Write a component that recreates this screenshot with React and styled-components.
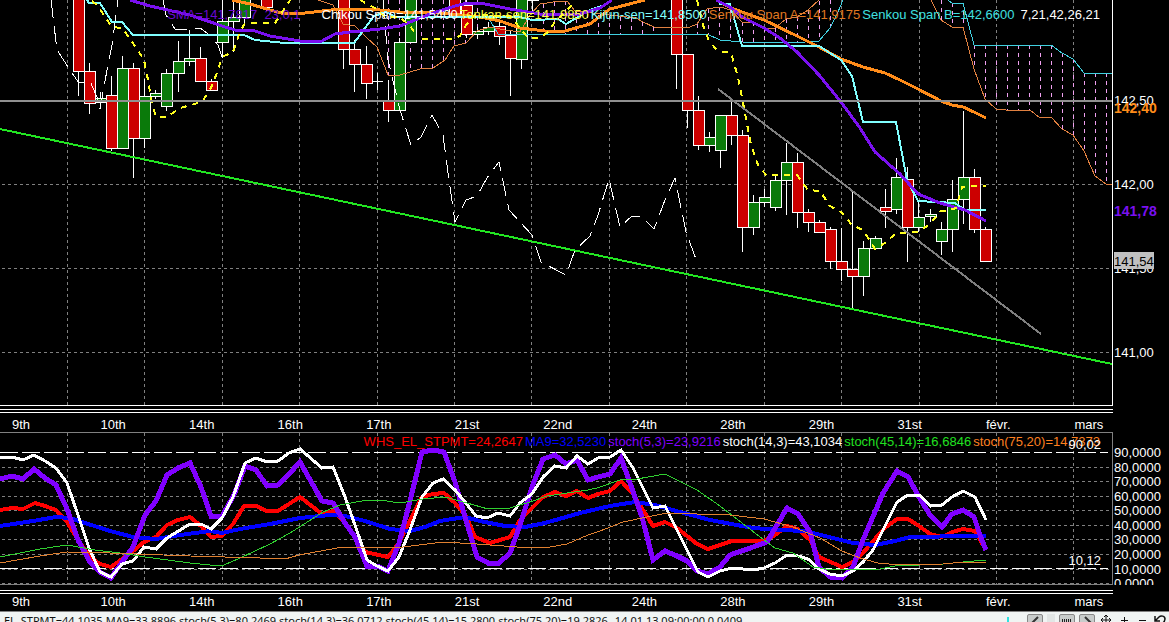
import styled, { createGlobalStyle } from "styled-components";

const GRID_X = [67, 144, 222, 299, 377, 454, 531, 609, 686, 764, 841, 919, 996, 1073];

const DATES = [
  "9th", "10th", "14th", "16th", "17th", "21st", "22nd",
  "24th", "28th", "29th", "31st", "févr.", "mars",
];

/* x center, body top, body bottom, wick top, wick bottom, rising */
const CANDLES = [
  [78, -5, 71, -5, 96, 0],
  [89, 71, 103, 63, 114, 0],
  [100, 98, 102, 92, 109, 1],
  [111, 95, 148, 76, 151, 0],
  [122, 68, 148, 56, 148, 1],
  [133, 68, 138, 63, 178, 0],
  [144, 96, 138, 79, 148, 1],
  [155, 93, 96, 90, 99, 1],
  [166, 73, 106, 69, 111, 1],
  [178, 61, 73, 41, 92, 1],
  [189, 58, 61, 30, 66, 1],
  [200, 58, 81, 47, 81, 0],
  [211, 81, 90, 79, 90, 0],
  [222, 21, 42, -5, 58, 1],
  [233, 17, 21, -5, 52, 1],
  [244, -5, 17, -5, 26, 1],
  [266, -5, 7, -5, 7, 0],
  [343, -5, 49, -5, 69, 0],
  [354, 49, 64, 40, 92, 0],
  [366, 64, 83, 46, 99, 0],
  [377, 81, 81, 73, 90, 1],
  [388, 101, 110, 80, 122, 0],
  [399, 42, 110, 38, 110, 1],
  [410, -5, 42, -5, 42, 1],
  [454, -5, 16, -5, 16, 0],
  [466, 5, 34, 0, 38, 0],
  [477, 31, 34, 27, 39, 1],
  [488, 27, 31, 22, 35, 1],
  [499, 26, 36, 20, 45, 0],
  [510, 35, 58, 30, 96, 0],
  [521, -5, 59, -5, 69, 1],
  [532, -5, 0, -5, 12, 1],
  [676, -5, 54, -5, 89, 0],
  [687, 54, 110, 54, 128, 0],
  [698, 110, 145, 96, 150, 0],
  [709, 137, 145, 132, 152, 1],
  [720, 115, 150, 115, 168, 1],
  [731, 115, 135, 98, 145, 0],
  [742, 135, 227, 130, 252, 0],
  [753, 202, 227, 195, 235, 1],
  [764, 197, 202, 189, 207, 1],
  [775, 180, 207, 176, 211, 1],
  [786, 162, 180, 143, 215, 1],
  [797, 162, 212, 153, 228, 0],
  [808, 212, 222, 209, 232, 0],
  [819, 222, 232, 220, 232, 0],
  [830, 229, 261, 227, 269, 0],
  [841, 261, 269, 228, 281, 0],
  [852, 269, 276, 192, 308, 0],
  [863, 248, 276, 241, 296, 1],
  [875, 238, 248, 236, 250, 1],
  [885, 207, 211, 189, 228, 0],
  [896, 177, 209, 158, 214, 1],
  [907, 179, 227, 167, 262, 0],
  [918, 217, 227, 202, 232, 1],
  [930, 214, 216, 209, 222, 1],
  [941, 229, 241, 222, 255, 1],
  [952, 199, 229, 180, 252, 1],
  [963, 177, 199, 111, 224, 1],
  [974, 177, 229, 169, 233, 0],
  [985, 229, 261, 227, 261, 0],
];

/* x, top, bottom of each cloud bar */
const CLOUD = [
  [388, 0, 75], [399, 0, 75], [410, 0, 71], [421, 0, 69], [432, 0, 68], [443, 0, 60],
  [454, 0, 46], [465, 0, 43], [477, 0, 31], [543, 4, 34], [554, 2, 34], [565, 1, 34],
  [576, 11, 34], [587, 14, 34], [598, 15, 34], [609, 15, 34], [620, 17, 34], [631, 18, 34],
  [642, 22, 34], [653, 27, 34], [697, 24, 34], [708, 9, 34], [719, 7, 40], [730, 10, 41],
  [742, 22, 42], [753, 22, 42], [764, 28, 43], [775, 28, 43], [786, 19, 43], [797, 17, 43],
  [808, 10, 42], [819, 1, 41], [830, 0, 28], [941, 0, 20], [952, 3, 27], [963, 3, 27],
  [974, 45, 69], [985, 45, 99], [996, 45, 109], [1007, 45, 110], [1018, 45, 110],
  [1029, 45, 110], [1040, 45, 118], [1051, 45, 117], [1062, 53, 129], [1073, 59, 135],
  [1084, 73, 151], [1095, 73, 176], [1106, 73, 184],
];

const SPAN_A = [
  "318,0 333,5 343,24 355,26 366,37 377,47 388,75 400,75 420,69 433,68 445,60 454,46 466,43 477,31 490,27 505,30 520,32 530,15 540,4 560,1 567,1 575,11 600,14 636,18 643,22 654,27 690,27 697,24 707,9 720,7 731,10 742,22 753,22 764,28 775,28 786,19 797,17 808,10 819,0",
  "931,0 941,20 952,27 963,27 974,69 985,99 996,109 1006,110 1030,110 1040,118 1051,117 1062,129 1073,135 1084,151 1095,176 1106,184 1112,185",
];

const SPAN_B = [
  "488,17 498,34 707,34 720,40 742,42 780,43 805,42 819,41 830,28 838,12 843,0",
  "948,0 952,3 963,3 974,45 1051,45 1062,53 1073,59 1084,73 1112,73",
];

const KIJUN = [
  "87,0 89,3 100,3 112,22 122,22 133,35 244,35 255,40 285,43 354,43 374,16 386,12 396,17 520,17 532,20 558,19 566,24 590,10 605,5 612,0",
  "718,0 720,4 730,4 742,46 819,46 841,60 852,76 863,122 896,122 907,180 918,201 955,203 965,210 986,210",
];

const SMA = [
  "130,0 150,6 190,15 222,26 235,30 255,31 270,36 300,41 322,41 335,34 350,32 380,29 400,26 430,14 455,6 468,3 485,4 510,9 540,14 580,14 600,8 612,0",
  "716,0 730,7 742,17 764,28 780,38 797,52 819,75 841,102 860,128 875,152 900,174 918,194 940,203 965,210 986,221",
];

const LONG_MA = [
  "232,0 250,4 270,10 285,14 305,13 340,9 370,9 400,12 440,13 480,17 500,21 520,28 545,31 565,31 590,24 610,9 645,0",
  "716,0 731,8 742,12 764,20 797,36 819,47 841,59 863,67 885,73 900,80 918,89 941,101 952,105 963,107 974,112 986,118",
];

const TENKAN = [
  "92,1 98,6 107,20 112,27 122,28 131,40 144,60 148,80 152,103 156,117 167,117 180,108 195,104 204,99 211,88 218,70 222,57 233,52 240,32 245,23 275,23 285,8 290,0",
  "360,0 375,8 385,17 400,17 410,26 415,33",
  "422,39 452,39 460,36 466,25 475,15 510,16 520,28 528,38 540,38 548,32 555,22 565,12 575,2",
  "697,0 703,25 709,41 718,51 731,53 738,77 744,108 751,145 758,165 766,175 797,175 808,190 820,191 830,206 841,212 852,225 863,230 875,249 885,243 896,233 918,232 930,224 941,211 950,210 956,208 962,187 970,186 986,186",
];

const CHIKOU = [
  "51,0 57,50 72,73 79,83 90,81 97,97 100,109 107,70 112,45 118,0",
  "163,0 166,15 175,29 189,30 200,28 211,36 218,45 222,57",
  "383,0 388,60 400,110 411,145 421,137 432,115 443,135 449,180 455,222 466,200 477,196 487,178 499,162 509,210 520,222 532,235 541,262 566,275 575,250 590,236 598,215 609,179 620,227 632,216 642,217 654,229 665,200 675,178 686,232 697,262",
];

const LEVELS = [467, 481, 496, 510, 525, 539, 554, 569, 583];

const OSCILLATORS = [
  {
    color: "#ff0000",
    width: 4,
    points:
      "0,510 12,508 23,509 35,503 45,506 56,510 67,522 78,540 90,557 100,564 111,567 122,559 133,551 144,542 156,537 167,525 178,520 190,517 201,526 211,537 222,536 233,524 244,506 256,506 267,511 278,511 289,504 300,497 322,514 333,511 345,523 355,537 365,552 388,557 399,543 410,520 422,497 433,494 444,493 455,503 466,516 475,537 490,543 510,537 520,520 532,508 543,497 555,492 566,496 577,491 588,498 598,494 610,491 621,481 633,494 653,526 665,522 677,528 697,544 708,549 720,545 732,541 764,541 775,535 787,526 798,529 810,540 819,557 842,567 853,562 863,553 880,533 886,527 897,519 908,519 919,526 930,534 942,537 952,532 963,529 975,531 986,550",
  },
  {
    color: "#0000ff",
    width: 4,
    points:
      "0,526 33,521 56,517 70,518 85,523 110,531 133,537 156,539 180,535 210,531 222,533 240,529 270,524 300,518 330,515 345,516 365,521 390,529 410,531 425,527 440,521 465,517 480,521 505,526 525,527 545,523 580,513 610,506 635,502 655,505 680,512 710,520 753,528 780,530 805,531 825,536 853,543 875,545 895,541 910,537 970,536 986,536",
  },
  {
    color: "#8000ff",
    width: 5,
    points:
      "0,479 12,476 23,479 34,469 45,478 56,485 67,509 78,540 90,562 100,572 111,578 122,562 133,547 145,515 156,501 167,475 178,468 190,463 201,487 211,516 222,516 234,495 245,466 256,470 267,486 278,485 289,474 300,462 322,501 333,503 345,523 355,537 367,566 377,566 388,571 399,543 410,501 422,452 433,450 444,452 455,482 465,517 477,557 488,563 499,563 510,553 520,525 532,487 543,459 555,455 566,464 577,460 588,480 598,477 610,474 621,458 630,483 642,517 653,560 665,551 677,556 687,561 697,571 708,574 720,567 730,555 753,547 767,542 777,525 787,508 798,514 810,532 819,567 830,577 842,578 853,567 863,540 883,493 897,471 908,477 919,497 930,515 942,527 952,514 963,510 974,517 980,535 986,550",
  },
  {
    color: "#ffffff",
    width: 3,
    points:
      "0,458 12,457 23,460 34,455 45,461 56,468 67,483 78,515 89,548 100,572 111,577 122,564 133,561 144,547 156,549 167,538 190,524 201,524 211,529 222,518 233,497 245,463 256,458 267,462 278,461 289,453 300,449 322,468 333,467 345,497 355,525 367,560 377,566 388,571 399,557 410,530 422,497 433,483 443,479 455,490 465,502 476,516 487,518 498,513 510,516 520,503 532,494 543,477 555,466 566,468 577,456 588,464 598,458 610,457 621,450 633,468 653,508 665,506 677,530 698,572 708,577 720,571 732,568 743,569 753,570 764,568 775,563 787,555 798,556 808,559 819,569 830,574 842,576 853,571 863,562 873,550 883,530 897,502 908,495 919,495 931,506 942,505 952,497 963,491 975,497 986,520",
  },
  {
    color: "#30d030",
    width: 1,
    points:
      "0,557 40,549 67,545 95,550 120,553 145,557 190,563 210,565 224,565 240,558 270,544 290,533 323,512 340,505 367,500 380,500 400,503 423,499 445,497 467,503 488,509 510,508 530,502 547,496 588,490 597,488 623,479 637,479 665,474 697,490 720,506 764,540 775,548 793,553 813,567 833,570 880,569 895,566 943,564 963,562 986,560",
  },
  {
    color: "#e08030",
    width: 1,
    points:
      "0,563 40,556 67,552 110,553 190,556 260,558 285,559 299,555 337,548 360,547 403,547 443,542 477,544 517,547 550,547 567,544 588,535 600,531 623,522 647,517 667,513 697,514 730,515 764,519 793,527 820,538 842,551 860,558 878,563 900,565 943,564 963,562 986,562",
  },
];

const PRICE_LEGEND = [
  ["Chikou Span=141,5400", "#ffffff"],
  ["Tenkan-sen=141,9850", "#ffff40"],
  ["Kijun-sen=141,8500", "#80ffff"],
  ["Senkou Span A=141,9175", "#e07820"],
  ["Senkou Span B=142,6600", "#40e0e0"],
];

const STOCH_LEGEND = [
  ["WHS_EL_STPMT=24,2647", "#ff0000"],
  ["MA9=32,5230", "#0000ff"],
  ["stoch(5,3)=23,9216", "#8000ff"],
  ["stoch(14,3)=43,1034", "#ffffff"],
  ["stoch(45,14)=16,6846", "#20e020"],
  ["stoch(75,20)=14,7373", "#ff8020"],
];

const Candle = ({ data: [x, top, bottom, high, low, up] }) => (
  <g stroke="#ffffff">
    <line x1={x + 0.5} y1={high} x2={x + 0.5} y2={low} />
    {top === bottom ? (
      <line x1={x - 5} y1={top + 0.5} x2={x + 6} y2={top + 0.5} />
    ) : (
      <rect
        x={x - 4.5}
        y={top + 0.5}
        width="11"
        height={bottom - top}
        fill={up ? "#0a7a0a" : "#cc0000"}
      />
    )}
  </g>
);

const Curve = ({ parts, ...rest }) =>
  parts.map((points) => <polyline key={points} points={points} fill="none" {...rest} />);

const PriceChart = () => (
  <ChartSvg viewBox="0 0 1112 405" preserveAspectRatio="none" height="405">
    <g stroke="#808080" strokeDasharray="3 3">
      {GRID_X.map((x) => (
        <line key={x} x1={x + 0.5} y1="0" x2={x + 0.5} y2="405" />
      ))}
      {[184, 268, 352].map((y) => (
        <line key={y} x1="2" y1={y + 0.5} x2="1112" y2={y + 0.5} />
      ))}
    </g>
    <g stroke="#f0a0f0" strokeDasharray="4 4">
      {CLOUD.map(([x, top, bottom]) => (
        <line key={x} x1={x + 0.5} y1={top} x2={x + 0.5} y2={bottom} />
      ))}
    </g>
    {CANDLES.map((c) => (
      <Candle key={c[0]} data={c} />
    ))}
    <Curve parts={SPAN_A} stroke="#e08040" />
    <Curve parts={SPAN_B} stroke="#40d0e0" />
    <Curve parts={CHIKOU} stroke="#ffffff" strokeDasharray="18 8" />
    <Curve parts={LONG_MA} stroke="#ff8c1a" strokeWidth="3" />
    <Curve parts={KIJUN} stroke="#80ffff" strokeWidth="2" />
    <Curve parts={SMA} stroke="#7a10f0" strokeWidth="3" />
    <Curve parts={TENKAN} stroke="#ffff20" strokeWidth="2" strokeDasharray="6 6" />
    <line x1="0" y1="101" x2="1112" y2="101" stroke="#909090" strokeWidth="2" />
    <line x1="718" y1="89" x2="1041" y2="334" stroke="#808080" strokeWidth="2" />
    <line x1="0" y1="129" x2="1112" y2="364" stroke="#22e622" strokeWidth="2" />
  </ChartSvg>
);

const StochChart = () => (
  <ChartSvg viewBox="0 433 1112 151" preserveAspectRatio="none" height="151">
    <g stroke="#808080" strokeDasharray="3 3">
      {GRID_X.map((x) => (
        <line key={x} x1={x + 0.5} y1="433" x2={x + 0.5} y2="584" />
      ))}
      {LEVELS.map((y) => (
        <line key={y} x1="2" y1={y + 0.5} x2="1112" y2={y + 0.5} />
      ))}
    </g>
    <g stroke="#ffffff" strokeDasharray="18 4">
      <line x1="0" y1="452.5" x2="1108" y2="452.5" />
      <line x1="0" y1="568.5" x2="1108" y2="568.5" />
    </g>
    {OSCILLATORS.map((o) => (
      <polyline key={o.color} points={o.points} fill="none" stroke={o.color} strokeWidth={o.width} />
    ))}
  </ChartSvg>
);

const DateScale = ({ pad, gap }) => (
  <DateAxis $pad={pad} $gap={gap}>
    <DateRow>
      {DATES.map((d) => (
        <span key={d}>{d}</span>
      ))}
    </DateRow>
  </DateAxis>
);

const App = () => {
  return (
    <>
      <GlobalStyle />
      <Page>
        <Board>
          <PricePlot>
            <PriceChart />
            <Legend $top={7}>
              <LegendItem $color="#6a08d0" $space={19}>SMA=141,7817&nbsp; 23,0,1</LegendItem>
              {PRICE_LEGEND.map(([text, color]) => (
                <LegendItem key={text} $color={color}>{text}</LegendItem>
              ))}
              <LegendItem $color="#ffffff" $before={4}>7,21,42,26,21</LegendItem>
            </Legend>
          </PricePlot>
          <AxisSvg height="406">
            <text x="1" y="105">142,50</text>
            <BoldTick x="1" y="113" fill="#ff8c1a">142,40</BoldTick>
            <text x="1" y="189">142,00</text>
            <BoldTick x="1" y="216" fill="#7a10f0">141,78</BoldTick>
            <text x="1" y="273">141,50</text>
            <rect x="1" y="252" width="40" height="17" fill="#c0c0c0" />
            <text x="1" y="266" fill="#000000">141,54</text>
            <text x="1" y="357">141,00</text>
          </AxisSvg>

          <DateScale pad="4px 0 0" gap={3} />
          <span />

          <StochPlot>
            <StochChart />
            <Legend $top={1}>
              {STOCH_LEGEND.map(([text, color]) => (
                <LegendItem key={text} $color={color}>{text}</LegendItem>
              ))}
            </Legend>
            <LevelTag $top={4}>90,02</LevelTag>
            <LevelTag $top={120}>10,12</LevelTag>
          </StochPlot>
          <AxisSvg height="153">
            {[20, 35, 49, 64, 78, 93, 107, 122, 137, 151].map((y, i) => (
              <text key={y} x="1" y={y + 5}>{90 - i * 10 || "0"},0000</text>
            ))}
          </AxisSvg>

          <DateScale pad="0 0 2px" gap={5} />
          <span />
        </Board>

        <StatusBar>
          <StatusText>
            <span>EL_STPMT=44,1035</span>
            <span>MA9=33,8896</span>
            <span>stoch(5,3)=80,2469</span>
            <span>stoch(14,3)=36,0712</span>
            <span>stoch(45,14)=15,2800</span>
            <span>stoch(75,20)=19,2826</span>
            <StatusTime>14.01.13 09:00:00 0,0409</StatusTime>
          </StatusText>
          <Tools>
            <CursorMark />
            <Tool aria-label="Draw" $framed>
              <svg width="14" height="14">
                <path d="M10 2L5 7l4 4" fill="none" stroke="#333" strokeWidth="2" />
              </svg>
            </Tool>
            <Grip />
            <Tool aria-label="Ruler" $framed>
              <svg width="14" height="14" shapeRendering="crispEdges">
                <path d="M2.5 4v5M4.5 4v5M6.5 4v5M8.5 4v5M10.5 4v5" stroke="#222" />
              </svg>
            </Tool>
            <Tool aria-label="Line" $framed>
              <svg width="14" height="14">
                <path d="M5 2l5 5-4 4" fill="none" stroke="#333" strokeWidth="2" />
              </svg>
            </Tool>
            <Tool aria-label="Move">
              <svg width="12" height="12">
                <path d="M6 1v10M1 6h10M4 3l2-2 2 2M4 9l2 2 2-2M3 4L1 6l2 2M9 4l2 2-2 2" fill="none" stroke="#111" />
              </svg>
            </Tool>
            <Tool aria-label="Zoom in">
              <svg width="12" height="12" shapeRendering="crispEdges">
                <path d="M6.5 3v7M3 6.5h7" stroke="#111" />
              </svg>
            </Tool>
            <Tool aria-label="Zoom out">
              <svg width="12" height="12" shapeRendering="crispEdges">
                <path d="M3 6.5h7" stroke="#111" />
              </svg>
            </Tool>
            <Tool aria-label="Undo">
              <svg width="14" height="12">
                <path d="M2 2v5h5M2 7l4-4c2-2 6-1 6 2s-2 4-4 6" fill="none" stroke="#111" strokeWidth="1.5" />
              </svg>
            </Tool>
          </Tools>
        </StatusBar>
      </Page>
    </>
  );
};

export default App;

const GlobalStyle = createGlobalStyle`
  * {
    box-sizing: border-box;
  }

  body {
    margin: 0;
    background: #000;
    overflow: hidden;
  }
`;

const Page = styled.main`
  font-family: "Liberation Sans", Arial, sans-serif;
  font-size: 13px;
  line-height: 15px;
  color: #fff;
`;

const Board = styled.div`
  display: grid;
  grid-template-columns: minmax(0, 1fr) 56px;
`;

const PricePlot = styled.section`
  position: relative;
  border-right: 1px solid #fff;
  border-bottom: 1px solid #fff;
`;

const StochPlot = styled.section`
  position: relative;
  border: 1px solid #808080;
  border-left: none;
`;

const ChartSvg = styled.svg`
  display: block;
  width: 100%;
  shape-rendering: crispEdges;
`;

const AxisSvg = styled.svg`
  display: block;
  width: 100%;
  overflow: hidden;
  fill: #fff;
`;

const BoldTick = styled.text`
  font-size: 14px;
  font-weight: bold;
`;

/* The legend is drawn over the curves */
const Legend = styled.div`
  position: absolute;
  top: ${({ $top }) => $top}px;
  right: 12px;
  display: flex;
  gap: 2px;
  white-space: nowrap;
`;

const LegendItem = styled.span`
  color: ${({ $color }) => $color};
  margin-left: ${({ $before }) => $before || 0}px;
  margin-right: ${({ $space }) => $space || 0}px;
`;

const LevelTag = styled.span`
  position: absolute;
  top: ${({ $top }) => $top}px;
  right: 11px;
`;

const DateAxis = styled.div`
  margin-top: ${({ $gap }) => $gap}px;
  padding: ${({ $pad }) => $pad};
  border-top: 4px double #fff;
  overflow: hidden;
`;

/* Runs past the right edge, the last day is not complete */
const DateRow = styled.div`
  display: grid;
  grid-template-columns: repeat(13, 1fr);
  margin: 0 -50px 0 12px;
  white-space: nowrap;
`;

const StatusBar = styled.footer`
  display: flex;
  justify-content: space-between;
  height: 24px;
  border-top: 1px solid #808080;
  background: #f0f4f3;
  color: #111;
`;

const StatusText = styled.div`
  display: flex;
  gap: 3px;
  padding: 1px 0 0 4px;
  font-family: "Noto Sans", Tahoma, sans-serif;
  font-size: 11px;
  white-space: nowrap;
`;

const StatusTime = styled.time`
  margin-left: 4px;
`;

const Tools = styled.div`
  display: flex;
  align-items: flex-start;
  gap: 4px;
  padding: 2px 2px 0 0;
`;

const CursorMark = styled.span`
  width: 2px;
  height: 14px;
  margin: 3px 14px 0 0;
  background: #30e0e0;
`;

const Grip = styled.span`
  width: 8px;
  height: 18px;
  background: #e2e6e5;
`;

const Tool = styled.button`
  display: flex;
  align-items: center;
  justify-content: center;
  width: ${({ $framed }) => ($framed ? 16 : 14)}px;
  height: ${({ $framed }) => ($framed ? 16 : 12)}px;
  padding: 0;
  border: ${({ $framed }) => ($framed ? "1px solid #888" : "none")};
  border-radius: 2px;
  background: ${({ $framed }) => ($framed ? "#c8cccb" : "transparent")};
`;
